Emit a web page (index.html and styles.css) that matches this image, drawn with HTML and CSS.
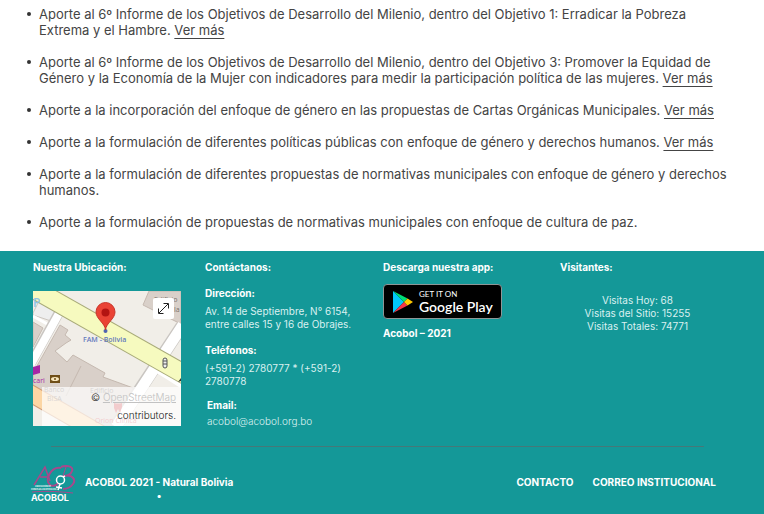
FILE: index.html
```html
<!DOCTYPE html>
<html lang="es">
<head>
<meta charset="utf-8">
<meta name="viewport" content="width=device-width, initial-scale=1">
<title>ACOBOL</title>
<link rel="stylesheet" href="styles.css">
</head>
<body>
<main>
  <ul class="reports">
    <li>Aporte al 6º Informe de los Objetivos de Desarrollo del Milenio, dentro del Objetivo 1: Erradicar la Pobreza Extrema y el Hambre. <a href="#">Ver más</a></li>
    <li>Aporte al 6º Informe de los Objetivos de Desarrollo del Milenio, dentro del Objetivo 3: Promover la Equidad de Género y la Economía de la Mujer con indicadores para medir la participación política de las mujeres. <a href="#">Ver más</a></li>
    <li>Aporte a la incorporación del enfoque de género en las propuestas de Cartas Orgánicas Municipales. <a href="#">Ver más</a></li>
    <li>Aporte a la formulación de diferentes políticas públicas con enfoque de género y derechos humanos. <a href="#">Ver más</a></li>
    <li>Aporte a la formulación de diferentes propuestas de normativas municipales con enfoque de género y derechos humanos.</li>
    <li>Aporte a la formulación de propuestas de normativas municipales con enfoque de cultura de paz.</li>
  </ul>
</main>
<footer class="footer">
  <div class="columns">
    <section>
      <h2>Nuestra Ubicación:</h2>
      <div class="map">
        <svg class="map-art" viewBox="0 0 148 135" preserveAspectRatio="xMidYMid slice" role="img" aria-label="Mapa de FAM - Bolivia">
          <rect width="148" height="135" fill="#f1eee8"/>
          <path d="M0 22L6 10L24 20L18 30L0 24z" fill="#eeeeee" stroke="#ccc6c0"/>
          <path d="M0 31L10 37L0 56z" fill="#d9d0c9" stroke="#c5b9b0"/>
          <path d="M0 25L16 34" stroke="#fff" stroke-width="3"/>
          <path d="M116 0H148V33L110 14z" fill="#d9d0c9" stroke="#c5b9b0"/>
          <path d="M27 34L35 39L32 44L38 49L33 52L22 60L34 71L40 64L72 82L70 86L103 98L88 135H62L0 98V82z" fill="#d9d0c9" stroke="#c5b9b0"/>
          <path d="M48 75L33 105" stroke="#c5b9b0"/>
          <path d="M-2 72L28 18" stroke="#c9c5c1" stroke-width="10"/>
          <path d="M-2 73L29 17" stroke="#fff" stroke-width="8"/>
          <path d="M149 35L82 136" stroke="#c9c5c1" stroke-width="13"/>
          <path d="M150 34L83 136M123 75L150 92" stroke="#fff" stroke-width="11"/>
          <path d="M-8 -7L158 87" stroke="#a8aa79" stroke-width="20"/>
          <path d="M-8 -7L158 87" stroke="#f6fabf" stroke-width="18"/>
          <path d="M-5 101L68 143" stroke="#cf9b75" stroke-width="18"/>
          <path d="M-5 101L68 143" stroke="#fcd6a4" stroke-width="16"/>
          <text x="0" y="16" class="parking">P</text>
          <text x="121" y="11" class="place">Edificio</text><text x="141" y="21" class="place">la</text>
          <text x="50" y="51" class="pin-label">FAM - Bolivia</text>
          <text x="0" y="92" class="place shop">cari</text>
          <path d="M0 76L7 74V82L0 84z" fill="#a626a6"/>
          <rect x="17" y="84" width="10" height="8" fill="#6f4e17"/><ellipse cx="22" cy="88" rx="4" ry="2" fill="#f8e7bd"/><circle cx="22" cy="88" r="1" fill="#6f4e17"/>
          <g fill="#eee" stroke="#555"><rect x="130" y="67" width="4" height="10" rx="2"/><path d="M130 70H134M130 73H134"/></g>
          <path d="M145 91L148 87V90z" fill="#333"/>
          <text x="11" y="101" class="place">Banco</text><text x="14" y="110" class="place">BISA</text><text x="57" y="102" class="place">Edificio</text>
          <path d="M81 112Q85 113 89 112V116L87 122L85 118L83 122L81 117z" fill="#d35459"/>
          <text x="62" y="132" class="place clinic">Orion Clinica</text>
          <circle cx="72.500" cy="40" r="2" fill="#4f63af"/>
          <path d="M72.500 39C72 32 63 28 63 21A9.500 9.500 0 0 1 82 21C82 28 73 32 72.500 39z" fill="#ea4335" stroke="#c93529"/>
          <circle cx="72.500" cy="21.500" r="4" fill="#b31412"/>
        </svg>
        <button class="expand" type="button" aria-label="Ampliar mapa">
          <svg viewBox="0 0 21 21" width="21" height="21" fill="none" stroke="#222" stroke-width="1"><path d="M6 15L15 6M10.500 5.500H15.500V10.500M5.500 10.500V15.500H10.500"/></svg>
        </button>
        <p class="credit">© <a href="#">OpenStreetMap</a><br>contributors.</p>
      </div>
    </section>
    <section class="contact">
      <h2>Contáctanos:</h2>
      <h3>Dirección:</h3>
      <p>Av. 14 de Septiembre, N° 6154, entre calles 15 y 16 de Obrajes.</p>
      <h3>Teléfonos:</h3>
      <p>(+591-2) 2780777 * (+591-2) 2780778</p>
      <div class="email">
        <h3>Email:</h3>
        <p>acobol@acobol.org.bo</p>
      </div>
    </section>
    <section>
      <h2>Descarga nuestra app:</h2>
      <a class="play" href="#">
        <svg viewBox="0 0 21 24" width="21" height="24" aria-hidden="true">
          <path d="M1 1V23L12 12z" fill="#00c8fa"/><path d="M1 1L15.500 8.500L12 12z" fill="#00df76"/><path d="M1 23L15.500 15.500L12 12z" fill="#f63448"/><path d="M15.500 8.500L21 12L15.500 15.500L12 12z" fill="#ffc900"/>
        </svg>
        <span class="play-text"><small>GET IT ON</small><span>Google Play</span></span>
      </a>
      <h3 class="app-name">Acobol – 2021</h3>
    </section>
    <section>
      <h2>Visitantes:</h2>
      <p class="visits">Visitas Hoy: 68<br>Visitas del Sitio: 15255<br>Visitas Totales: 74771</p>
    </section>
  </div>
  <hr>
  <div class="bottom">
    <svg class="logo" viewBox="0 0 46 38" width="46" height="38" role="img" aria-label="ACOBOL">
      <g fill="none" stroke="#a9488c">
        <path d="M4 20L15 2L20 16M10 12H18" stroke-width="1.500"/>
        <path d="M31 3C21 1 14 15 20 20C23 22 27 20 28 18" stroke-width="2"/>
        <path d="M31 2C36 0 44 1 42 6C41 10 36 11 34 11C43 9 46 15 43 19C40 23 36 24 33 24" stroke-width="2"/>
        <path d="M36 2L33 11M2 27C14 26 23 26 43 28" stroke-width="1"/>
      </g>
      <g fill="none" stroke="#fff" stroke-width="1.500"><circle cx="30.500" cy="15" r="4"/><path d="M30 19L28 25M26 22L32 23M33 12L35 11"/></g>
      <text x="5" y="22" class="logo-small">ASOCIACIÓN DE</text>
      <text x="1" y="25" class="logo-small">CONCEJALAS DE BOLIVIA</text>
      <text x="1" y="36" class="logo-name">ACOBOL</text>
    </svg>
    <p class="copyright">ACOBOL 2021 - Natural Bolivia<br>•</p>
    <nav><a href="#">CONTACTO</a><a href="#">CORREO INSTITUCIONAL</a></nav>
  </div>
</footer>
</body>
</html>
```
FILE: styles.css
```css
* { box-sizing: border-box; }
body {
  margin: 0;
  background: #fff;
  color: #444;
  font: 400 13px/16px Inter, "Liberation Sans", sans-serif;
}
a { color: inherit; text-decoration: none; }
h2, h3, p { margin: 0; }
.reports {
  margin: 0;
  padding: 6px 28px 21px 39px;
  display: grid;
  gap: 16px;
  list-style: none;
}
.reports li { position: relative; }
.reports li::before {
  content: "";
  position: absolute;
  left: -12px;
  top: 6px;
  width: 4px;
  height: 4px;
  border-radius: 50%;
  background: #333;
}
.reports a {
  text-decoration: underline 1px;
  text-underline-offset: 3px;
  text-decoration-skip-ink: none;
}
.footer {
  min-height: calc(100vh - 251px);
  padding: 9px 33px 9px;
  background: #149898;
  color: #fff;
  font-size: 10px;
  line-height: 13px;
}
.columns {
  display: grid;
  grid-template-columns: 172fr 178fr 177fr 171fr;
}
h2, h3 { font-size: 10px; line-height: 14px; font-weight: 700; }
.map {
  position: relative;
  width: 148px;
  height: 135px;
  margin-top: 17px;
  overflow: hidden;
}
.map-art { display: block; width: 100%; height: 100%; }
.parking { font: 600 12px "Open Sans", sans-serif; fill: #8fc3e6; }
.place { font: 7px "Open Sans", sans-serif; fill: #79706a; }
.shop { fill: #a626a6; }
.clinic { fill: #d35459; }
.pin-label { font: 600 7px "Open Sans", sans-serif; fill: #6479bd; }
.expand {
  position: absolute;
  top: 7px;
  right: 7px;
  width: 21px;
  height: 21px;
  padding: 0;
  border: 0;
  border-radius: 2px;
  background: #fff;
}
.expand svg { display: block; }
.credit {
  position: absolute;
  right: 0;
  bottom: 0;
  width: 139px;
  padding: 1px 5px 2px 0;
  background: rgba(255, 255, 255, .7);
  color: #222;
  font-size: 10px;
  font-weight: 300;
  line-height: 18px;
  text-align: right;
}
.credit a { color: #c2c2c2; text-decoration: underline; }
.contact p, .visits { color: #d9f0f0; }
.contact p { margin-top: 5px; max-width: 150px; }
.contact h3 { margin-top: 12px; }
.contact .email { padding-left: 2px; }
.contact .email p { margin-top: 3px; font-weight: 300; }
.contact .email h3 { margin-top: 10px; }
.play {
  display: flex;
  align-items: center;
  gap: 6px;
  width: 119px;
  height: 35px;
  margin-top: 10px;
  padding-left: 8px;
  border: 1px solid #8e9696;
  border-radius: 4px;
  background: #000;
}
.play svg { flex: none; }
.play-text {
  display: grid;
  font: 600 14px/16px Lato, sans-serif;
  white-space: nowrap;
}
.play-text small { font: 400 8px/10px Lato, sans-serif; }
.app-name { margin-top: 7px; }
.visits { margin: 20px 16px 0 0; text-align: center; }
hr {
  height: 1px;
  margin: 18px 27px 0 18px;
  border: 0;
  background: #467878;
}
.bottom { display: flex; align-items: flex-start; padding-top: 18px; }
.logo { flex: none; margin-left: -3px; }
.logo-small { font: 700 2px/2px Inter, sans-serif; fill: #fff; }
.logo-name { font: 700 9px Inter, sans-serif; fill: #fff; }
.copyright {
  margin: 11px 0 0 9px;
  font-weight: 700;
  text-align: center;
}
nav {
  display: flex;
  gap: 19px;
  margin: 11px 15px 0 auto;
  font-weight: 700;
}
```
